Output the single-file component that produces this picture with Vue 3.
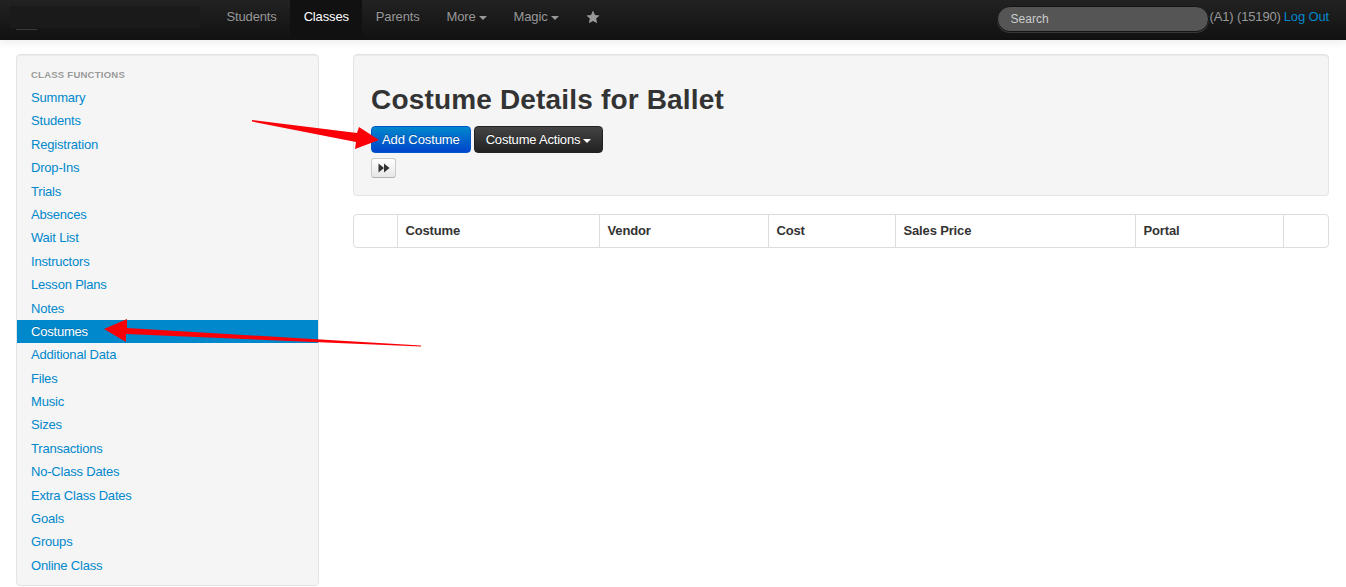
<template>
  <div class="page">
    <div class="navbar">
      <div class="brand"><span class="brand-line"></span></div>
      <ul class="nav">
        <li v-for="item in navItems" :key="item.label" :class="{ active: item.active }">
          {{ item.label }}<span v-if="item.caret" class="caret"></span>
        </li>
        <li class="star-item">
          <svg width="14" height="14" viewBox="0 0 24 24"><path fill="#999" d="M12 1l3.400 7.400 8 .9-6 5.400 1.700 8L12 18.700 4.900 22.700l1.700-8-6-5.400 8-.9z"/></svg>
        </li>
      </ul>
      <div class="nav-right">
        <input class="search" type="text" placeholder="Search">
        <span class="user">(A1) (15190)</span>
        <a class="logout" href="#">Log Out</a>
      </div>
    </div>

    <div class="content">
      <div class="sidebar">
        <div class="side-title">CLASS FUNCTIONS</div>
        <a v-for="link in sideLinks" :key="link" href="#" class="side-link" :class="{ active: link === 'Costumes' }">{{ link }}</a>
      </div>

      <div class="main">
        <div class="hero">
          <h1>Costume Details for Ballet</h1>
          <div class="btn-row">
            <button class="btn btn-blue">Add Costume</button>
            <button class="btn btn-dark">Costume Actions<span class="caret white"></span></button>
          </div>
          <button class="btn-small">
            <svg width="12" height="10" viewBox="0 0 12 10"><path fill="#333" d="M0.500 0.500L6 5 0.500 9.500zM6 0.500L11.500 5 6 9.500z"/></svg>
          </button>
        </div>

        <div class="table">
          <div v-for="(col, i) in columns" :key="i" class="cell" :style="{ width: col.width + 'px' }">{{ col.name }}</div>
        </div>
      </div>
    </div>

    <!-- red arrows drawn over the screenshot -->
    <svg class="arrows" width="1346" height="587" viewBox="0 0 1346 587">
      <path fill="#fb0007" d="M252 120L357 133 359 127 379 140 355 149 356 142 252 121.500z"/>
      <path fill="#fb0007" d="M421 345.500L127 328 127 319 104 329 126 342 126 334 421 346.500z"/>
    </svg>
  </div>
</template>

<script setup>
const navItems = [
  { label: 'Students' },
  { label: 'Classes', active: true },
  { label: 'Parents' },
  { label: 'More', caret: true },
  { label: 'Magic', caret: true },
]

const sideLinks = [
  'Summary', 'Students', 'Registration', 'Drop-Ins', 'Trials', 'Absences', 'Wait List',
  'Instructors', 'Lesson Plans', 'Notes', 'Costumes', 'Additional Data', 'Files', 'Music',
  'Sizes', 'Transactions', 'No-Class Dates', 'Extra Class Dates', 'Goals', 'Groups', 'Online Class',
]

const columns = [
  { name: '', width: 43 },
  { name: 'Costume', width: 202 },
  { name: 'Vendor', width: 169 },
  { name: 'Cost', width: 127 },
  { name: 'Sales Price', width: 240 },
  { name: 'Portal', width: 148 },
  { name: '', width: 45 },
]
</script>

<style>
html, body {
  margin: 0;
  background: #fff;
}
</style>

<style scoped>
.page {
  position: relative;
  width: 1346px;
  height: 587px;
  overflow: hidden;
  font-family: "Liberation Sans", Arial, sans-serif;
  font-size: 13px;
  line-height: 20px;
  letter-spacing: -0.15px;
  color: #333;
}

.navbar {
  display: flex;
  align-items: flex-start;
  height: 40px;
  background: linear-gradient(#222, #111);
  box-shadow: 0 1px 10px rgba(0, 0, 0, 0.1);
}

.brand {
  position: relative;
  flex: none;
  width: 190px;
  height: 22px;
  margin: 6px 13px 0 10px;
  background: #1a1a1a;
}

.brand-line {
  position: absolute;
  left: 6px;
  bottom: -2px;
  width: 21px;
  height: 1px;
  background: #3a3a3a;
}

.nav {
  display: flex;
  list-style: none;
  margin: 0;
  padding: 0;
}

.nav li {
  padding: 7px 13.500px 9px;
  color: #999;
  text-shadow: 0 -1px 0 rgba(0, 0, 0, 0.25);
}

.nav li.active {
  color: #fff;
  background: #111;
}

.nav li.star-item {
  display: flex;
  align-items: center;
  height: 20px;
  padding: 7px 13px 9px 14px;
}

.caret {
  display: inline-block;
  margin-left: 3px;
  vertical-align: middle;
  border-top: 4px solid #999;
  border-left: 4px solid transparent;
  border-right: 4px solid transparent;
}

.caret.white {
  border-top-color: #fff;
}

.nav-right {
  display: flex;
  align-items: flex-start;
  margin-left: auto;
  margin-top: 6px;
  padding-right: 17px;
  color: #999;
}

.search {
  width: 212px;
  height: 26px;
  box-sizing: border-box;
  padding: 0 12px 0 13px;
  margin-right: 1px;
  border: 1px solid #151515;
  border-radius: 14px;
  background: #555;
  box-shadow: 0 1px 0 rgba(255, 255, 255, 0.15);
  color: #ccc;
  font-family: inherit;
  font-size: 12px;
}

.search::placeholder {
  color: #ccc;
  opacity: 1;
}

.user {
  margin-top: 1px;
  margin-right: 3px;
}

.logout {
  margin-top: 1px;
  color: #0088cc;
  text-decoration: none;
}

.content {
  display: flex;
  align-items: flex-start;
  padding: 14px 17px 0 16px;
  gap: 34px;
}

.sidebar {
  box-sizing: border-box;
  flex: none;
  width: 303px;
  height: 532px;
  padding: 10px 0 0;
  background: #f5f5f5;
  border: 1px solid #e3e3e3;
  border-radius: 4px;
  box-shadow: inset 0 1px 1px rgba(0, 0, 0, 0.05);
}

.side-title {
  padding: 0 14px;
  height: 21px;
  font-size: 9.500px;
  font-weight: bold;
  letter-spacing: 0.25px;
  color: #999;
  text-shadow: 0 1px 0 rgba(255, 255, 255, 0.5);
}

.side-link {
  display: block;
  height: 23.400px;
  line-height: 23.400px;
  padding: 0 14px;
  letter-spacing: -0.2px;
  color: #0088cc;
  text-decoration: none;
}

.side-link.active {
  color: #fff;
  background: #0088cc;
  text-shadow: 0 -1px 0 rgba(0, 0, 0, 0.2);
}

.main {
  flex: 1;
  min-width: 0;
}

.hero {
  box-sizing: border-box;
  height: 142px;
  padding: 27px 17px 0;
  background: #f5f5f5;
  border: 1px solid #e3e3e3;
  border-radius: 4px;
  box-shadow: inset 0 1px 1px rgba(0, 0, 0, 0.05);
}

h1 {
  margin: 0 0 8px;
  font-size: 28px;
  line-height: 36px;
  font-weight: bold;
  letter-spacing: 0.17px;
  color: #333;
}

.btn-row {
  display: flex;
  gap: 3px;
  margin-bottom: 5px;
}

.btn {
  height: 27px;
  padding: 0 10px;
  border-radius: 4px;
  font-family: inherit;
  font-size: 13px;
  letter-spacing: -0.1px;
  color: #fff;
  text-shadow: 0 -1px 0 rgba(0, 0, 0, 0.25);
}

.btn-blue {
  border: 1px solid #0055cc;
  background: linear-gradient(#0088cc, #0044cc);
}

.btn-dark {
  padding: 0 11px;
  border: 1px solid #222;
  background: linear-gradient(#444, #222);
  letter-spacing: -0.2px;
}

.btn-small {
  display: flex;
  align-items: center;
  justify-content: center;
  width: 25px;
  height: 20px;
  padding: 0;
  border: 1px solid #ccc;
  border-bottom-color: #b3b3b3;
  border-radius: 3px;
  background: linear-gradient(#fff, #e6e6e6);
}

.table {
  display: flex;
  box-sizing: border-box;
  height: 34px;
  margin-top: 18px;
  border: 1px solid #ddd;
  border-radius: 4px;
}

.cell {
  box-sizing: border-box;
  flex: none;
  padding: 6px 7.500px;
  font-weight: bold;
  border-left: 1px solid #ddd;
  color: #333;
}

.cell:first-child {
  border-left: none;
}

.arrows {
  position: absolute;
  left: 0;
  top: 0;
  pointer-events: none;
}
</style>
